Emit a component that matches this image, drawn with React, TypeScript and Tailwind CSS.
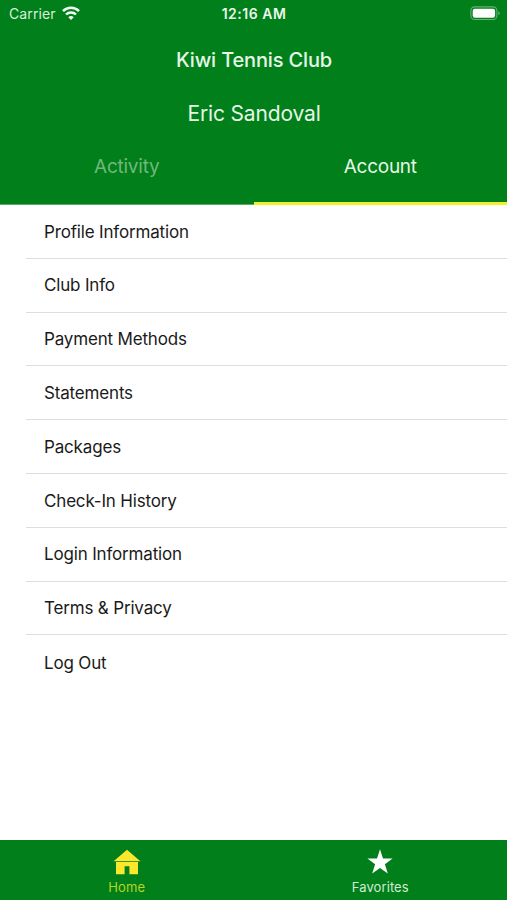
import React from 'react';

interface MenuItem {
  id: string;
  title: string;
}

const menuItems: MenuItem[] = [
  { id: 'profile', title: 'Profile Information' },
  { id: 'club', title: 'Club Info' },
  { id: 'payment', title: 'Payment Methods' },
  { id: 'statements', title: 'Statements' },
  { id: 'packages', title: 'Packages' },
  { id: 'checkin', title: 'Check-In History' },
  { id: 'login', title: 'Login Information' },
  { id: 'terms', title: 'Terms & Privacy' },
  { id: 'logout', title: 'Log Out' },
];

function WifiIcon() {
  return (
    <svg width="18" height="14" viewBox="0 0 18 14" fill="none" stroke="#f2fbf2" strokeWidth="2.5">
      <path d="M1 5.1a11.3 11.3 0 0 1 16 0" />
      <path d="M4 8.5a7 7 0 0 1 10 0" />
      <path d="M9 14 6.3 11.2a3.9 3.9 0 0 1 5.4 0z" fill="#f2fbf2" stroke="none" />
    </svg>
  );
}

function BatteryIcon() {
  return (
    <svg width="31" height="15" viewBox="0 0 31 15" fill="none">
      <rect x="0.9" y="0.9" width="26" height="12.6" rx="3.8" stroke="#66b373" strokeWidth="1.1" />
      <rect x="2.7" y="2.7" width="22.4" height="9" rx="2.2" fill="#ffffff" />
      <path d="M28.4 5.2c1.9.6 1.9 3.4 0 4z" fill="#66b373" />
    </svg>
  );
}

function HomeIcon() {
  return (
    <svg width="28" height="26" viewBox="0 0 28 26" fill="#fbe72b">
      <path d="M14 0.8 27.4 12.2H0.6z" />
      <path d="M3 13h22v12.2h-8.6v-7.9h-4.8v7.9H3z" />
    </svg>
  );
}

function StarIcon() {
  return (
    <svg width="26" height="26" viewBox="0 0 26 26" fill="#ffffff">
      <path d="M13 0.3 16 9.4H25.6L17.9 15.2 20.8 24.6 13 18.9 5.2 24.6 8.1 15.2 0.4 9.4H10z" />
    </svg>
  );
}

function StatusBar() {
  return (
    <div className="grid h-[26px] grid-cols-3 items-center pl-[9px] pr-[6px]">
      <div className="flex items-center gap-[6px] text-[14px] text-[#d9f0d9]">
        <span className="tracking-[0.1px]">Carrier</span>
        <WifiIcon />
      </div>
      <div className="pr-[2px] text-center text-[14px] font-semibold tracking-[0.5px] text-[#eaf8ea]">12:16 AM</div>
      <div className="flex justify-end">
        <BatteryIcon />
      </div>
    </div>
  );
}

export default function App() {
  return (
    <div className="flex h-[900px] w-[507px] flex-col overflow-hidden bg-white font-['Inter',sans-serif]">
      <header className="flex h-[205px] shrink-0 flex-col bg-[#007f1a] text-[#e6f7e6]">
        <StatusBar />
        <h1 className="mt-[18px] pl-px text-center text-[20px] leading-8 font-medium tracking-[-0.15px]">
          Kiwi Tennis Club
        </h1>
        <h2 className="mt-[22px] pl-px text-center text-[21px] leading-8 tracking-[-0.15px]">Eric Sandoval</h2>
        <div className="grid grow grid-cols-2 text-center text-[19px] leading-8 tracking-[-0.25px]">
          <button className="border-b border-[#5aab68] pt-[21px] pb-[21px] text-[#72b87c]">Activity</button>
          <button className="border-b-[3px] border-[#f2f02c] pt-[21px] pb-[19px]">Account</button>
        </div>
      </header>

      <main className="grow">
        <ul className="pl-[26px]">
          {menuItems.map(({ id, title }) => (
            <li
              key={id}
              className="flex h-[53.8px] items-center border-b border-[#dedede] pt-[2px] pl-[18px] text-[17px] tracking-[-0.17px] text-[#1a1a1a] last:border-b-0"
            >
              {title}
            </li>
          ))}
        </ul>
      </main>

      <nav className="grid h-[60px] shrink-0 grid-cols-2 bg-[#007f1a] text-[13px]">
        <button className="flex flex-col items-center pt-[9px] text-[#b4d525]">
          <HomeIcon />
          <span className="mt-[3px] leading-[18px] tracking-[0.15px]">Home</span>
        </button>
        <button className="flex flex-col items-center pt-[9px] text-[#d3ecd3]">
          <StarIcon />
          <span className="mt-[3px] leading-[18px] tracking-[0.1px]">Favorites</span>
        </button>
      </nav>
    </div>
  );
}
